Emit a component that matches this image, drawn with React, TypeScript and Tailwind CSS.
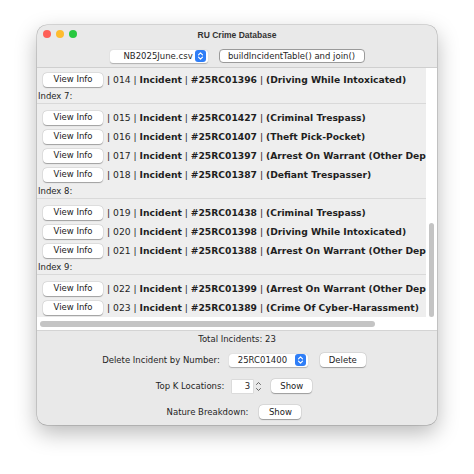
import { ReactNode } from "react";

type Row = { no: string; id: string; nature: string };

const groups: { label?: string; rows: Row[] }[] = [
  { rows: [{ no: "014", id: "#25RC01396", nature: "(Driving While Intoxicated)" }] },
  {
    label: "Index 7:",
    rows: [
      { no: "015", id: "#25RC01427", nature: "(Criminal Trespass)" },
      { no: "016", id: "#25RC01407", nature: "(Theft Pick-Pocket)" },
      { no: "017", id: "#25RC01397", nature: "(Arrest On Warrant (Other Department))" },
      { no: "018", id: "#25RC01387", nature: "(Defiant Trespasser)" },
    ],
  },
  {
    label: "Index 8:",
    rows: [
      { no: "019", id: "#25RC01438", nature: "(Criminal Trespass)" },
      { no: "020", id: "#25RC01398", nature: "(Driving While Intoxicated)" },
      { no: "021", id: "#25RC01388", nature: "(Arrest On Warrant (Other Department))" },
    ],
  },
  {
    label: "Index 9:",
    rows: [
      { no: "022", id: "#25RC01399", nature: "(Arrest On Warrant (Other Department))" },
      { no: "023", id: "#25RC01389", nature: "(Crime Of Cyber-Harassment)" },
    ],
  },
];

function MacButton({ children, className = "" }: { children: ReactNode; className?: string }) {
  return (
    <div
      className={`flex h-[14px] items-center justify-center rounded-[4px] bg-white text-[8.5px] text-[#222] shadow-[0_0.5px_1px_rgba(0,0,0,0.3),0_0_0_0.5px_rgba(0,0,0,0.08)] ${className}`}
    >
      {children}
    </div>
  );
}

function Stepper() {
  return (
    <svg width="11" height="12" viewBox="0 0 11 12">
      <rect width="11" height="12" rx="3" fill="#2f7ef7" />
      <path
        d="M3.5 4.8 L5.5 2.8 L7.5 4.8 M3.5 7.2 L5.5 9.2 L7.5 7.2"
        stroke="white"
        strokeWidth="1.2"
        fill="none"
        strokeLinecap="round"
        strokeLinejoin="round"
      />
    </svg>
  );
}

export default function App() {
  return (
    <div className="h-[474px] w-[474px] bg-white pl-[37px] pt-[25px] font-['DejaVu_Sans',sans-serif] text-[#1f1f1f]">
      <div className="flex h-[400px] w-[400px] flex-col overflow-hidden rounded-[10px] bg-[#e9e9e9] shadow-[0_0_0_0.5px_rgba(0,0,0,0.25),0_8px_22px_rgba(0,0,0,0.28)]">
        {/* title bar */}
        <div className="relative flex h-[20px] items-center justify-center">
          <div className="absolute left-[6px] top-[5px] flex gap-[5px]">
            <div className="h-[8px] w-[8px] rounded-full bg-[#fe5f57]" />
            <div className="h-[8px] w-[8px] rounded-full bg-[#febc2e]" />
            <div className="h-[8px] w-[8px] rounded-full bg-[#28c840]" />
          </div>
          <span className="font-['Liberation_Sans',sans-serif] text-[8.5px] font-bold text-[#333]">RU Crime Database</span>
        </div>

        {/* toolbar */}
        <div className="flex h-[22px] items-center justify-center gap-[11px]">
          <div className="flex h-[13px] w-[98px] items-center justify-between rounded-[3px] bg-white pl-[14px] pr-[2px] text-[8.5px] shadow-[0_0.5px_1px_rgba(0,0,0,0.25)]">
            <span>NB2025June.csv</span>
            <Stepper />
          </div>
          <div className="flex h-[14px] w-[146px] items-center justify-center rounded-[4px] border border-[#9a9a9a] bg-white text-[8.5px]">
            buildIncidentTable() and join()
          </div>
        </div>

        {/* scroll pane */}
        <div className="flex h-[263px] flex-col border-t border-[#cfcfcf]">
          <div className="flex min-h-0 flex-1">
            <div className="flex-1 overflow-hidden bg-[#eeeeee] pt-[2px]">
              {groups.map((g, gi) => (
                <div key={gi}>
                  {g.label && (
                    <>
                      <div className="flex h-[14px] items-center pl-[1px] text-[8.5px]">{g.label}</div>
                      <div className="h-px bg-[#d9d9d9]" />
                      <div className="h-[4px]" />
                    </>
                  )}
                  {g.rows.map((r) => (
                    <div key={r.no} className="flex h-[19px] items-center whitespace-nowrap pl-[6px]">
                      <MacButton className="w-[60px] shrink-0">View Info</MacButton>
                      <span className="ml-[4px] text-[9.2px]">
                        | {r.no} | <b>Incident</b> | <b>{r.id}</b> | <b>{r.nature}</b>
                      </span>
                    </div>
                  ))}
                </div>
              ))}
            </div>
            <div className="relative w-[11px] bg-white">
              <div className="absolute bottom-0 left-[3px] top-[155px] w-[5px] rounded-full bg-[#c4c4c4]" />
            </div>
          </div>
          <div className="flex h-[13px] bg-white">
            <div className="flex flex-1 items-center pl-[3px]">
              <div className="h-[6px] w-[335px] rounded-full bg-[#c4c4c4]" />
            </div>
          </div>
        </div>

        {/* bottom controls */}
        <div className="flex flex-1 flex-col items-center border-t border-[#d4d4d4] pt-[1px] text-[8.5px]">
          <div className="flex h-[14px] items-center">Total Incidents: 23</div>
          <div className="mt-[6px] flex h-[16px] items-center pr-[6px]">
            <span>Delete Incident by Number:</span>
            <div className="ml-[9px] flex h-[13px] w-[79px] items-center justify-between rounded-[3px] bg-white pl-[9px] pr-[2px] shadow-[0_0.5px_1px_rgba(0,0,0,0.25)]">
              <span>25RC01400</span>
              <Stepper />
            </div>
            <MacButton className="ml-[12px] w-[46px]">Delete</MacButton>
          </div>
          <div className="mt-[10px] flex h-[16px] items-center pr-[6px]">
            <span>Top K Locations:</span>
            <div className="ml-[8px] flex h-[13px] w-[21px] items-center justify-end bg-white pr-[3px] shadow-[0_0_0_0.5px_rgba(0,0,0,0.12)]">
              3
            </div>
            <svg className="ml-[2px]" width="7" height="13" viewBox="0 0 7 13">
              <path
                d="M1.5 4.5 L3.5 2.5 L5.5 4.5 M1.5 8.5 L3.5 10.5 L5.5 8.5"
                stroke="#555"
                strokeWidth="0.9"
                fill="none"
                strokeLinecap="round"
                strokeLinejoin="round"
              />
            </svg>
            <MacButton className="ml-[9px] w-[41px]">Show</MacButton>
          </div>
          <div className="mt-[10px] flex h-[16px] items-center pr-[6px]">
            <span>Nature Breakdown:</span>
            <MacButton className="ml-[11px] w-[42px]">Show</MacButton>
          </div>
        </div>
      </div>
    </div>
  );
}
